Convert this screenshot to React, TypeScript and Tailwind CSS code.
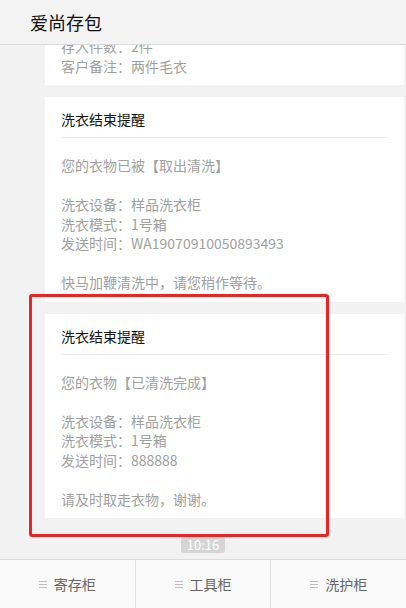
const font = { fontFamily: '"Noto Sans CJK SC", "Noto Sans", sans-serif' }

type Notice = { status: string; sendTime: string; footer: string }

const notices: Notice[] = [
  { status: '您的衣物已被【取出清洗】', sendTime: 'WA19070910050893493', footer: '快马加鞭清洗中，请您稍作等待。' },
  { status: '您的衣物【已清洗完成】', sendTime: '888888', footer: '请及时取走衣物，谢谢。' },
]

function NoticeCard({ n }: { n: Notice }) {
  return (
    <div className="ml-[45px] mr-[2px] mt-[12px] bg-white px-[16px] pt-[12px] pb-[9px]">
      <div className="border-b border-[#ececec] pb-[8px] text-[14px] leading-[20px] text-[#111]">洗衣结束提醒</div>
      <div className="pt-[18px] text-[14px] leading-[19.5px] text-[#a0a0a0]">
        <p>{n.status}</p>
        <p>&nbsp;</p>
        <p>洗衣设备：样品洗衣柜</p>
        <p>洗衣模式：1号箱</p>
        <p>发送时间：{n.sendTime}</p>
        <p>&nbsp;</p>
        <p>{n.footer}</p>
      </div>
    </div>
  )
}

function MenuIcon() {
  return (
    <span className="flex w-[8px] flex-col gap-[2px]">
      <span className="h-px bg-[#bdbdbd]" />
      <span className="h-px bg-[#bdbdbd]" />
      <span className="h-px bg-[#bdbdbd]" />
    </span>
  )
}

export default function App() {
  const tabs = ['寄存柜', '工具柜', '洗护柜']

  return (
    <div className="relative flex h-[608px] w-[406px] flex-col overflow-hidden bg-[#f2f2f2]" style={font}>
      <header className="z-10 flex h-[45px] shrink-0 items-center border-b border-[#dadada] bg-[#f3f3f3] pl-[30px]">
        <h1 className="text-[18px] leading-none text-[#111]">爱尚存包</h1>
      </header>

      {/* scrolled list: first card is partly under the header */}
      <main className="flex flex-1 flex-col overflow-hidden">
        <div className="-mt-[8px] ml-[45px] mr-[2px] bg-white px-[16px] pb-[9px] text-[14px] leading-[19.5px] text-[#a0a0a0]">
          <p>存入件数：2件</p>
          <p>客户备注：两件毛衣</p>
        </div>

        {notices.map((n, i) => (
          <NoticeCard key={i} n={n} />
        ))}

        <div className="mt-[19px] flex justify-center">
          <span className="rounded-[3px] bg-[#d5d5d5] px-[6px] text-[13px] leading-[16px] text-white">10:16</span>
        </div>
      </main>

      <nav className="flex h-[49px] shrink-0 border-t border-[#dcdcdc] bg-[#fafafa]">
        {tabs.map((t, i) => (
          <div key={t} className={`flex flex-1 items-center justify-center gap-[7px] ${i > 0 ? 'border-l border-[#e0e0e0]' : ''}`}>
            <MenuIcon />
            <span className="text-[14px] text-[#666]">{t}</span>
          </div>
        ))}
      </nav>

      <div className="absolute left-[29px] top-[294px] h-[243px] w-[300px] rounded-[3px] border-[3px] border-[#ee2420]" />
    </div>
  )
}
